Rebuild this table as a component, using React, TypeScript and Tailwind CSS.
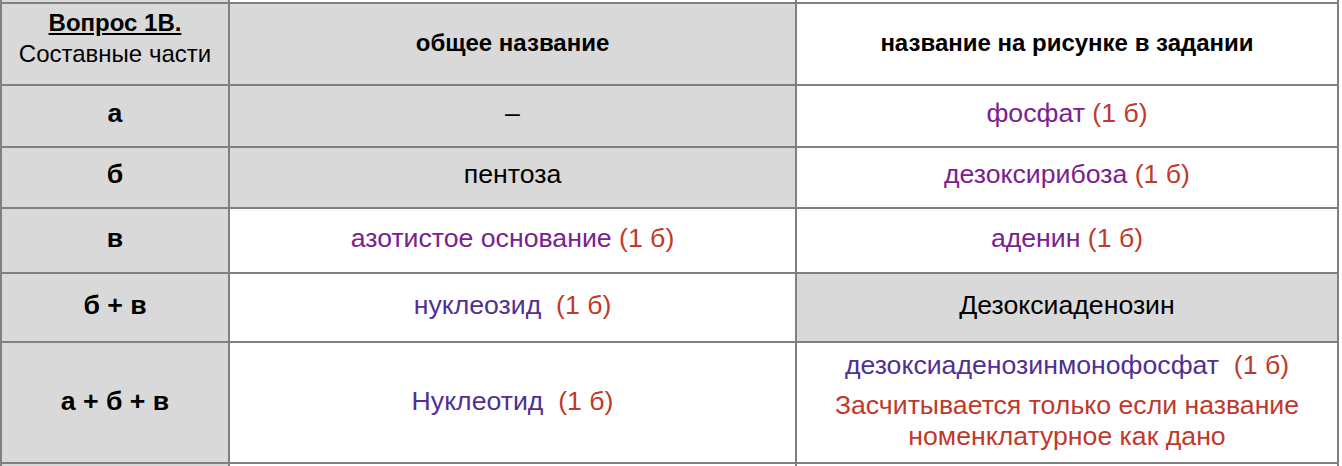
const PURPLE = "text-[#7a2190]";
const INDIGO = "text-[#513092]";
const RED = "text-[#c0392b]";

type Row = {
  key: string;
  h: string;
  label: React.ReactNode;
  general: React.ReactNode;
  generalGray?: boolean;
  figure: React.ReactNode;
  figureGray?: boolean;
};

function Pts() {
  return <span className={RED}>(1 б)</span>;
}

const rows: Row[] = [
  {
    key: "a",
    h: "h-[60px] pb-[6px]",
    label: "а",
    general: <span className="text-black">–</span>,
    generalGray: true,
    figure: (
      <>
        <span className={PURPLE}>фосфат </span>
        <Pts />
      </>
    ),
  },
  {
    key: "b",
    h: "h-[59px] pb-[8px]",
    label: "б",
    general: <span className="text-black">пентоза</span>,
    generalGray: true,
    figure: (
      <>
        <span className={PURPLE}>дезоксирибоза </span>
        <Pts />
      </>
    ),
  },
  {
    key: "v",
    h: "h-[63px] pb-[5px]",
    label: "в",
    general: (
      <>
        <span className={PURPLE}>азотистое основание </span>
        <Pts />
      </>
    ),
    figure: (
      <>
        <span className={PURPLE}>аденин </span>
        <Pts />
      </>
    ),
  },
  {
    key: "bv",
    h: "h-[67px] pb-[6px]",
    label: "б + в",
    general: (
      <>
        <span className={INDIGO}>нуклеозид&nbsp; </span>
        <Pts />
      </>
    ),
    figure: <span className="text-black">Дезоксиаденозин</span>,
    figureGray: true,
  },
  {
    key: "abv",
    h: "h-[119px] pb-[3px]",
    label: "а + б + в",
    general: (
      <>
        <span className={INDIGO}>Нуклеотид&nbsp; </span>
        <Pts />
      </>
    ),
    figure: (
      <div className="flex flex-col items-center">
        <div className="leading-[31px]">
          <span className={INDIGO}>дезоксиаденозинмонофосфат&nbsp; </span>
          <Pts />
        </div>
        <div className={`mt-[9px] leading-[31px] ${RED}`}>
          Засчитывается только если название
          <br />
          номенклатурное как дано
        </div>
      </div>
    ),
  },
];

function Cell({
  gray,
  className = "",
  children,
}: {
  gray?: boolean;
  className?: string;
  children?: React.ReactNode;
}) {
  return (
    <div
      className={`flex items-center justify-center text-center ${
        gray ? "bg-[#d9d9d9]" : "bg-white"
      } ${className}`}
    >
      {children}
    </div>
  );
}

export default function App() {
  return (
    <div className="h-[466px] w-[1342px] overflow-hidden bg-white font-['Liberation_Sans',Arial,sans-serif] text-[24px] text-black">
      <div className="grid w-[1339px] grid-cols-[226px_565px_540px] gap-[2px] bg-[#808080] px-[2px]">
        {/* tail of the previous table row */}
        <Cell gray className="h-[2px]" />
        <Cell className="h-[2px]" />
        <Cell className="h-[2px]" />

        <Cell gray className="h-[80px] flex-col pb-[12px] leading-[31px]">
          <span className="font-bold underline underline-offset-2">Вопрос 1В.</span>
          <span>Составные части</span>
        </Cell>
        <Cell gray className="h-[80px] pb-[3px] font-bold">
          общее название
        </Cell>
        <Cell className="h-[80px] pb-[3px] font-bold">название на рисунке в задании</Cell>

        {rows.map((r) => (
          <div key={r.key} className="contents text-[26.67px]">
            <Cell gray className={`${r.h} text-[26.67px] font-bold`}>
              {r.label}
            </Cell>
            <Cell gray={r.generalGray} className={`${r.h} text-[26.67px]`}>
              <div>{r.general}</div>
            </Cell>
            <Cell gray={r.figureGray} className={`${r.h} text-[26.67px]`}>
              <div>{r.figure}</div>
            </Cell>
          </div>
        ))}

        <Cell gray className="h-[2px]" />
        <Cell className="h-[2px]" />
        <Cell className="h-[2px]" />
      </div>
    </div>
  );
}
